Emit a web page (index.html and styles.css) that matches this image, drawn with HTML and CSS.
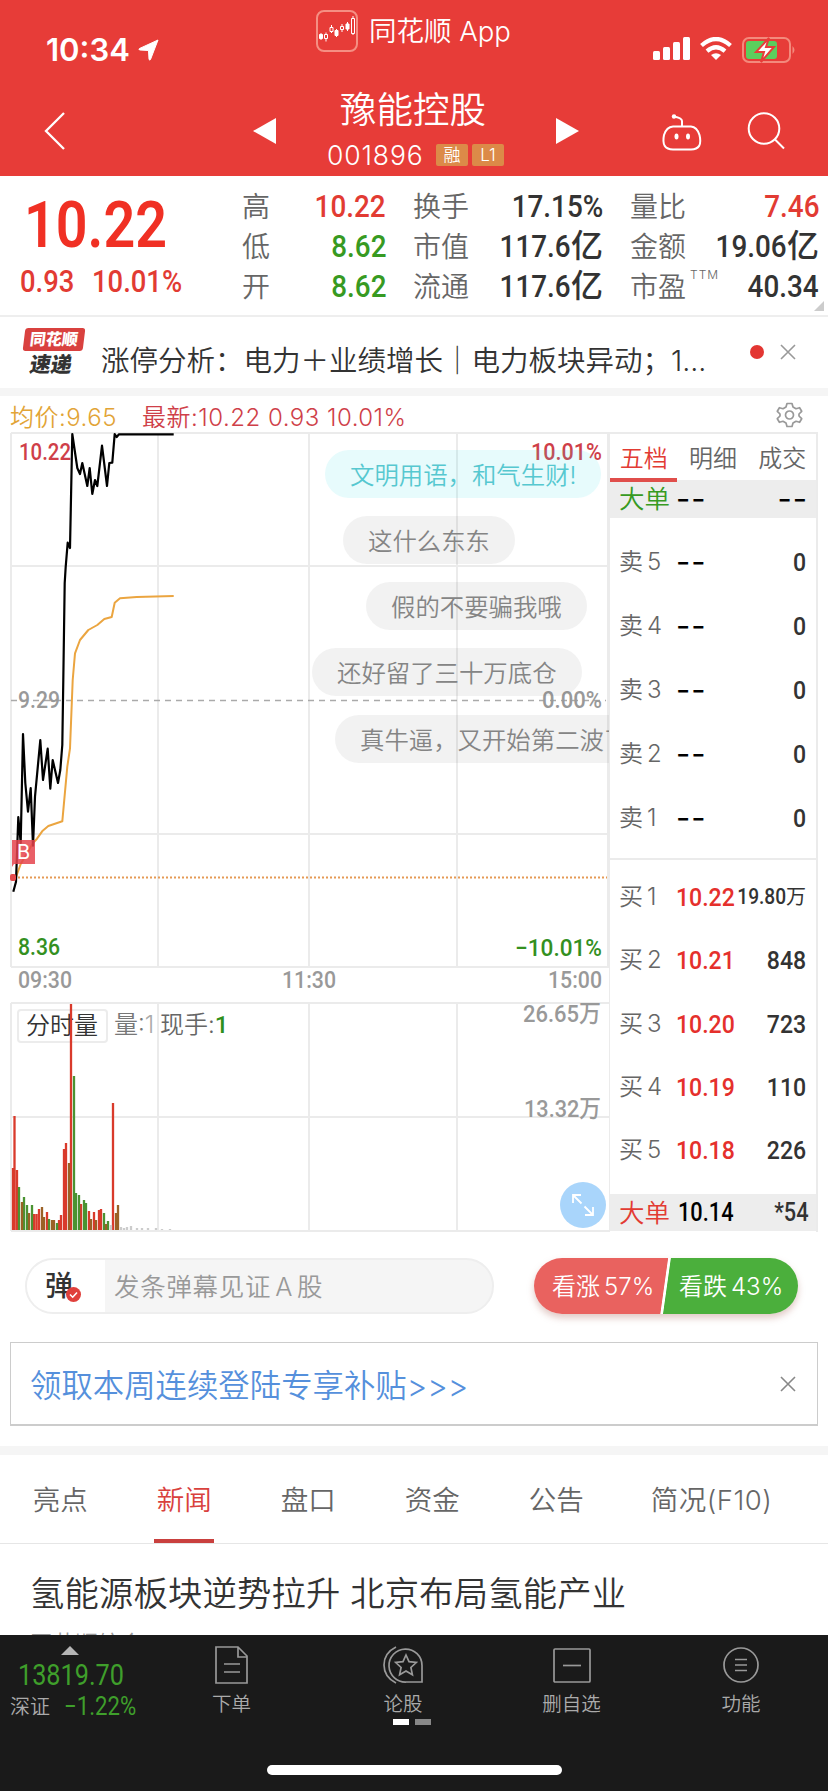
FILE: index.html
```html
<!DOCTYPE html>
<html lang="zh-CN">
<head>
    <meta charset="UTF-8">
    <meta name="viewport" content="width=device-width, initial-scale=1.0">
    <title>豫能控股 001896</title>
    <link rel="stylesheet" href="styles.css">
</head>
<body>
    <header class="header">
        <div class="status-bar">
            <div class="clock">10:34
                <svg width="22" height="22" viewBox="0 0 22 22"><path d="M20 1 1.500 9.500Q0 10.500 2 11L10.500 11.500 11 20Q11.500 22 12.500 20.500Z" fill="#fff" stroke="#fff" stroke-linejoin="round"/></svg>
            </div>
            <div class="app-name">
                <svg width="42" height="42" viewBox="0 0 42 42" fill="none" stroke="#fff">
                    <rect x="1" y="1" width="40" height="40" rx="7" stroke="#f58f83" stroke-width="2"/>
                    <path d="M5 23v7M10 22.500v9M15.500 15v8M20.500 19v8M26 14v8M31.500 12v9M37 6v19"/>
                    <path d="M3.500 24.500h3v4h-3zM19 20.500h3v5h-3zM30 14h3v5h-3z" fill="#fff"/>
                    <path d="M8.500 24.500h3v4h-3zM14 17.500h3v4h-3zM24.500 16.500h3v3h-3zM35.500 8.500h3v15h-3z" fill="#e73c38"/>
                </svg>
                <span>同花顺 App</span>
            </div>
            <div class="signals">
                <svg width="37" height="23" viewBox="0 0 37 23" fill="#fff"><rect y="14" width="7" height="9" rx="1.500"/><rect x="10" y="10" width="7" height="13" rx="1.500"/><rect x="20" y="5" width="7" height="18" rx="1.500"/><rect x="30" width="7" height="23" rx="1.500"/></svg>
                <svg width="32" height="23" viewBox="0 0 32 23" fill="none" stroke="#fff" stroke-width="4.200"><path d="M1.500 8.500Q16-4.500 30.500 8.500M7 14.200Q16 6.300 25 14.200"/><path d="M16 23l-5-5q5-3.600 10 0z" fill="#fff" stroke="none"/></svg>
                <svg width="54" height="26" viewBox="0 0 54 26"><rect x="1" y="1" width="47" height="24" rx="6" fill="none" stroke="#f38a7c" stroke-width="2"/><path d="M50.500 9q4 4 0 8z" fill="#f38a7c"/><rect x="4" y="4" width="31" height="18" rx="3" fill="#5bcf5d"/><path d="M27 1 14 15h8l-3 10 13-15h-8z" fill="#fff" stroke="#e73c38" stroke-width="2"/></svg>
            </div>
        </div>
        <div class="title-bar">
            <svg class="back" width="22" height="40" viewBox="0 0 22 40"><path d="M20 2 2 20l18 18" fill="none" stroke="#fff" stroke-width="2.300"/></svg>
            <svg class="prev" width="23" height="26" viewBox="0 0 23 26"><path d="M23 0v26L0 13z" fill="#fff"/></svg>
            <div class="stock">
                <h1>豫能控股</h1>
                <div class="code"><span>001896</span><i>融</i><i>L1</i></div>
            </div>
            <svg class="next" width="23" height="26" viewBox="0 0 23 26"><path d="M0 0v26l23-13z" fill="#fff"/></svg>
            <svg class="robot" width="42" height="38" viewBox="0 0 42 38" fill="none" stroke="#fff" stroke-width="2"><path d="M12 13.500H30Q36 14 38.500 22Q42 36.500 30 36.500H12Q0 36.500 3 22Q5.500 14 12 13.500Z"/><path d="M21 13V8q0-3-8-4.500"/><circle cx="13" cy="3.500" r="2.200" fill="#fff" stroke="none"/><ellipse cx="15.500" cy="23.500" rx="2" ry="3" fill="#fff" stroke="none"/><ellipse cx="27" cy="23.500" rx="2" ry="3" fill="#fff" stroke="none"/></svg>
            <svg class="search" width="38" height="38" viewBox="0 0 38 38" fill="none" stroke="#fff" stroke-width="2"><circle cx="17" cy="16.500" r="15.300"/><path d="m27.500 27 9.500 9.500"/></svg>
        </div>
    </header>

    <section class="quote">
        <div class="price">
            <div class="now"><b class="din">10.22</b></div>
            <div class="change"><b class="din">0.93</b><b class="din">10.01%</b></div>
        </div>
        <dl class="col col-1">
            <dt>高</dt><dd class="red"><b class="din">10.22</b></dd>
            <dt>低</dt><dd class="green"><b class="din">8.62</b></dd>
            <dt>开</dt><dd class="green"><b class="din">8.62</b></dd>
        </dl>
        <dl class="col col-2">
            <dt>换手</dt><dd><b class="din">17.15%</b></dd>
            <dt>市值</dt><dd><b class="din">117.6</b>亿</dd>
            <dt>流通</dt><dd><b class="din">117.6</b>亿</dd>
        </dl>
        <dl class="col col-3">
            <dt>量比</dt><dd class="red"><b class="din">7.46</b></dd>
            <dt>金额</dt><dd><b class="din">19.06</b>亿</dd>
            <dt>市盈<sup>TTM</sup></dt><dd><b class="din">40.34</b></dd>
        </dl>
        <div class="fold"></div>
    </section>

    <section class="flash">
        <div class="flash-logo"><span>同花顺</span><em>速递</em></div>
        <p>涨停分析：电力＋业绩增长｜电力板块异动；1...</p>
        <div class="dot"></div>
        <svg width="16" height="16" viewBox="0 0 16 16"><path d="m1 1 14 14M15 1 1 15" stroke="#999" stroke-width="1.600"/></svg>
    </section>

    <section class="chart-head">
        <span class="avg">均价:9.65</span>
        <span class="last">最新:10.22 0.93 10.01%</span>
        <svg width="27" height="26" viewBox="-13.500 -13 27 26" fill="none" stroke="#999" stroke-width="1.700" stroke-linejoin="round"><path d="M-2.500-11.500h5l1 3.500 3 1.700 3.600-1 2.100 3.600-2.700 2.700v2l2.700 2.700-2.100 3.600-3.600-1-3 1.700-1 3.500h-5l-1-3.500-3-1.700-3.600 1-2.100-3.600 2.700-2.700v-2l-2.700-2.700 2.100-3.600 3.600 1 3-1.700z"/><circle r="4"/></svg>
    </section>

    <section class="board">
        <div class="chart">
            <!-- price and volume share one x axis -->
            <svg width="609" height="806" viewBox="0 430 609 806">
                <g fill="none" stroke="#ebebeb" stroke-width="2">
                    <path d="M11 433H609M11 566H609M11 834H609M11 967H609M11 433V967M158 433V967M309 433V967M457 433V967M608 433V967"/>
                    <path d="M11 1003H609M11 1117H609M11 1231H609M11 1003V1231M158 1003V1231M309 1003V1231M457 1003V1231"/>
                </g>
                <path d="M11 700.500H606" stroke="#aaa" stroke-width="1.300" stroke-dasharray="6 5"/>
                <path d="M14 877.500H607" stroke="#e59a55" stroke-width="2" stroke-dasharray="2 2"/>

                <rect x="18" y="1010" width="89" height="32" rx="3" fill="#fff" stroke="#ececec" stroke-width="2"/>
                <g class="vol-text">
                    <text x="26" y="1034" fill="#333">分时量</text>
                    <text x="114" y="1033" fill="#777">量:<tspan fill="#aaa">1</tspan></text>
                    <text x="160" y="1033" fill="#666">现手:<tspan class="din-text" fill="#2f8f1c">1</tspan></text>
                </g>

                <g class="axis">
                    <text x="19" y="460" textLength="52" lengthAdjust="spacingAndGlyphs" fill="#cf3f49">10.22</text>
                    <text x="531" y="460" textLength="71" lengthAdjust="spacingAndGlyphs" fill="#cf3f49">10.01%</text>
                    <text x="18" y="708" textLength="42" lengthAdjust="spacingAndGlyphs" fill="#999">9.29</text>
                    <text x="542" y="708" textLength="60" lengthAdjust="spacingAndGlyphs" fill="#999">0.00%</text>
                    <text x="18" y="955" textLength="42" lengthAdjust="spacingAndGlyphs" fill="#34901f">8.36</text>
                    <text x="515" y="956" textLength="87" lengthAdjust="spacingAndGlyphs" fill="#34901f">−10.01%</text>
                    <text x="18" y="988" textLength="54" lengthAdjust="spacingAndGlyphs" fill="#999">09:30</text>
                    <text x="282" y="988" textLength="54" lengthAdjust="spacingAndGlyphs" fill="#999">11:30</text>
                    <text x="548" y="988" textLength="54" lengthAdjust="spacingAndGlyphs" fill="#999">15:00</text>
                    <text x="523" y="1022" textLength="78" lengthAdjust="spacingAndGlyphs" fill="#999">26.65万</text>
                    <text x="524" y="1117" textLength="77" lengthAdjust="spacingAndGlyphs" fill="#999">13.32万</text>
                </g>

                <g fill="none" stroke-width="2.300">
                    <path stroke="#d93a2b" d="M13 1230v-62M14.500 1230v-114M17 1230v-60M34 1230v-16M36.500 1230v-16M39 1230v-21M47 1230v-18M59 1230v-10M61 1230v-15M64 1230v-81M66 1230v-87M71 1230v-226M81 1230v-26M89 1230v-19M94 1230v-18M99 1230v-20M101 1230v-21M113 1230v-127"/>
                    <path stroke="#4a9332" d="M19 1230v-43M24 1230v-33M27 1230v-25M32 1230v-25M49 1230v-11M57 1230v-7M74 1230v-154M76 1230v-37M79 1230v-35M84 1230v-30M86 1230v-27M104 1230v-17M108 1230v-9"/>
                    <path stroke="#9a6126" d="M22 1230v-28M29 1230v-17M42 1230v-23M44 1230v-13M52 1230v-10M54 1230v-10M69 1230v-67M91 1230v-11M96 1230v-10M106 1230v-6M116 1230v-17M118 1230v-25"/>
                    <path stroke="#ccc" d="M111 1230v-5M121 1230v-3M124 1230v-2M127 1230v-3M131 1230v-4M137 1230v-2M142 1230v-2M148 1230v-2M156 1230v-2M162 1230v-1M170 1230v-1"/>
                </g>

                <polyline fill="none" stroke="#eba540" stroke-width="2" stroke-linejoin="round" points="15,880 20.700,864 33,843 37,838.700 42.700,830.700 48.300,826 62.300,821.300 67.300,766.700 70,748.300 72.700,680 75,653.300 80,640 88.300,630 97.300,625 104.300,619 111.700,617 114.700,602.700 120,598.300 136.700,597 173.700,596"/>
                <polyline fill="none" stroke="#000" stroke-width="2.200" stroke-linejoin="round" points="13.300,891.700 16,881.700 18.300,817 20.700,843 23,734 25.300,783 28,811.700 30.700,788 33,845.700 35,796.700 40.300,740 43,780 47.700,748.700 50.300,788.700 52.700,760 58,783 60.300,770 62.300,745 63.300,680 64.700,583 65.700,566.700 67.700,542.700 70,548 72.300,434 77.300,468 80,474 82.300,463 87.300,486 89.700,468 92.300,494 95,480 97.300,486 102,445.700 107,486 109.300,463 112.300,462.700 114.700,434 116.700,437 119,434.300 173.700,434.300"/>

                <rect x="10" y="874" width="6" height="7" rx="2" fill="#e54a4a"/>
                <path d="M12 840h23v24H14l-2 3z" fill="#e5434c" fill-opacity=".85"/>
                <text class="buy-mark" x="17" y="859" fill="#fff">B</text>
            </svg>
            <div class="danmu danmu-1">文明用语，和气生财!</div>
            <div class="danmu danmu-2">这什么东东</div>
            <div class="danmu danmu-3">假的不要骗我哦</div>
            <div class="danmu danmu-4">还好留了三十万底仓</div>
            <div class="danmu danmu-5">真牛逼，又开始第二波了</div>
            <div class="expand">
                <svg width="24" height="24" viewBox="0 0 24 24" fill="none" stroke="#fff" stroke-width="1.800"><path d="M2 10V2h8M2 2l8.500 8.500M22 14v8h-8M22 22l-8.500-8.500"/></svg>
            </div>
        </div>

        <aside class="book">
            <nav class="book-tabs"><span class="active">五档</span><span>明细</span><span>成交</span></nav>
            <div class="big-order"><span class="green">大单</span><b class="dash">--</b><b class="dash right">--</b></div>
            <div class="sells">
                <div class="row"><span>卖<i>5</i></span><b class="dash">--</b><b class="din">0</b></div>
                <div class="row"><span>卖<i>4</i></span><b class="dash">--</b><b class="din">0</b></div>
                <div class="row"><span>卖<i>3</i></span><b class="dash">--</b><b class="din">0</b></div>
                <div class="row"><span>卖<i>2</i></span><b class="dash">--</b><b class="din">0</b></div>
                <div class="row"><span>卖<i>1</i></span><b class="dash">--</b><b class="din">0</b></div>
            </div>
            <div class="buys">
                <div class="row"><span>买<i>1</i></span><b class="din bid">10.22</b><div class="small"><b class="din">19.80</b>万</div></div>
                <div class="row"><span>买<i>2</i></span><b class="din bid">10.21</b><b class="din">848</b></div>
                <div class="row"><span>买<i>3</i></span><b class="din bid">10.20</b><b class="din">723</b></div>
                <div class="row"><span>买<i>4</i></span><b class="din bid">10.19</b><b class="din">110</b></div>
                <div class="row"><span>买<i>5</i></span><b class="din bid">10.18</b><b class="din">226</b></div>
            </div>
            <div class="big-order bottom"><span class="red">大单</span><b class="din bid">10.14</b><b class="din right">*54</b></div>
        </aside>
    </section>

    <section class="vote">
        <div class="danmu-input">
            <div class="danmu-switch">弹
                <svg width="15" height="15" viewBox="0 0 15 15"><circle cx="7.500" cy="7.500" r="7.500" fill="#e0403c"/><path d="m4 7.500 2.700 2.700L11 5.500" fill="none" stroke="#fff" stroke-width="1.600"/></svg>
            </div>
            <span>发条弹幕见证<i>A</i>股</span>
        </div>
        <div class="vote-bar">
            <div class="up">看涨<i>57%</i></div>
            <div class="down">看跌<i>43%</i></div>
        </div>
    </section>

    <section class="ad">
        <a>领取本周连续登陆专享补贴&gt;&gt;&gt;</a>
        <svg width="16" height="16" viewBox="0 0 16 16"><path d="m1 1 14 14M15 1 1 15" stroke="#888" stroke-width="1.600"/></svg>
    </section>

    <nav class="tabs">
        <span>亮点</span>
        <span class="active">新闻</span>
        <span>盘口</span>
        <span>资金</span>
        <span>公告</span>
        <span>简况(F10)</span>
    </nav>

    <article class="news">
        <h2>氢能源板块逆势拉升 北京布局氢能产业</h2>
        <p>同花顺综合</p>
    </article>

    <footer class="footer">
        <div class="index">
            <div class="caret"></div>
            <b class="din">13819.70</b>
            <div class="index-name">深证<b class="din">−1.22%</b></div>
        </div>
        <div class="item item-1">
            <svg width="36" height="38" viewBox="0 0 36 38" fill="none" stroke="#999" stroke-width="1.700"><path d="M2 1h22l9 9v27H2zM24 1v10h9M10 18h16M10 26h16"/></svg>
            <span>下单</span>
        </div>
        <div class="item item-2">
            <svg width="40" height="38" viewBox="0 0 40 38" fill="none" stroke="#999" stroke-width="1.700"><path d="M13 1Q1 7 1 19t12 18"/><path d="M39 36H23.500A16.500 16.500 0 1 1 39 19.500z"/><path d="m23 9 3 6.700 7.300.8-5.400 5 1.500 7.200L23 25l-6.400 3.700 1.500-7.200-5.400-5 7.300-.8z"/></svg>
            <span>论股</span>
            <div class="pager"><i></i><i></i></div>
        </div>
        <div class="item item-3">
            <svg width="40" height="38" viewBox="0 0 40 38" fill="none" stroke="#999" stroke-width="1.700"><rect x="2" y="3" width="36" height="33" rx="1"/><path d="M11 19.500h18"/></svg>
            <span>删自选</span>
        </div>
        <div class="item item-4">
            <svg width="38" height="38" viewBox="0 0 38 38" fill="none" stroke="#999" stroke-width="1.700"><circle cx="19" cy="19" r="17"/><path d="M13 13.500h12M13 19h12M13 24.500h12"/></svg>
            <span>功能</span>
        </div>
        <div class="home"></div>
    </footer>
</body>
</html>
```
FILE: styles.css
```css
:root {
    --red: #e73c38;
    --text-red: #e23b33;
    --green: #379a22;
    --line: #ebebeb;
    --strip: #f5f5f5;
    --gray: #666;
}

* {
    box-sizing: border-box;
}

body {
    width: 828px;
    height: 1792px;
    margin: 0;
    background: #fff;
    color: #333;
    font-family: Inter, "Noto Sans CJK SC", sans-serif;
    font-weight: 350;
    overflow: hidden;
}

h1, h2, p, dl, dd {
    margin: 0;
    font-weight: inherit;
}

i, em {
    font-style: normal;
}

svg {
    display: block;
    flex: none;
}

.red {
    color: var(--text-red);
}

.green {
    color: var(--green);
}

/* narrow figures */
.din {
    display: inline-block;
    font-family: Roboto, sans-serif;
    font-weight: 500;
    transform: scaleX(.87);
    transform-origin: right center;
}

.header {
    height: 176px;
    background: var(--red);
    color: #fff;
}

.status-bar {
    display: grid;
    grid-template-columns: 316px 337px 1fr;
    height: 78px;
}

.clock {
    display: flex;
    gap: 8px;
    padding: 32px 0 0 46px;
    font-size: 31px;
    font-weight: 600;
    line-height: 36px;
}

.clock svg {
    margin-top: 7px;
}

.app-name {
    display: flex;
    gap: 11px;
    padding-top: 10px;
    font-size: 27.500px;
    line-height: 43px;
}

.signals {
    display: flex;
    gap: 10px;
    padding-top: 37px;
}

.title-bar {
    display: flex;
    height: 98px;
}

.back {
    margin: 33px 0 0 44px;
}

.prev {
    margin: 40px 0 0 187px;
}

.next {
    margin: 40px 0 0 51px;
}

.robot {
    margin: 35px 0 0 82px;
}

.search {
    margin: 34px 0 0 44px;
}

.stock {
    width: 178px;
    margin-left: 51px;
}

.stock h1 {
    margin-left: 13px;
    font-size: 36.500px;
    line-height: 65px;
    height: 64px;
}

.code {
    display: flex;
    gap: 4px;
    font-size: 26.500px;
    line-height: 26px;
}

.code span {
    width: 105px;
    letter-spacing: .9px;
    white-space: nowrap;
}

.code i {
    width: 32px;
    height: 22px;
    margin-top: 2px;
    border-radius: 2px;
    background: #dc8a48;
    font-size: 17px;
    line-height: 22px;
    text-align: center;
}

.quote {
    position: relative;
    display: grid;
    grid-template-columns: 242px 144px 217px 216px;
    height: 141px;
    border-bottom: 2px solid #eee;
}

.now {
    height: 94px;
    padding-left: 24px;
    color: #f03024;
    font-size: 64px;
    line-height: 95px;
}

.now .din {
    font-weight: 600;
}

.price .din {
    transform-origin: left center;
}

.change {
    display: flex;
    padding-left: 20px;
    color: var(--text-red);
    font-size: 31.500px;
    line-height: 24px;
}

.change .din:first-child {
    width: 72px;
}

.col {
    display: grid;
    grid-template-columns: 57px 1fr;
    grid-template-rows: repeat(3, 40px);
    padding-top: 10px;
    line-height: 43px;
}

.col dt {
    color: var(--gray);
    font-size: 28px;
    white-space: nowrap;
}

.col dd {
    font-size: 32px;
    line-height: 39px;
    text-align: right;
    font-weight: 500;
    white-space: nowrap;
}

.col-2, .col-3 {
    padding-left: 27px;
}

.col dt sup {
    margin-left: 4px;
    font-size: 12px;
    letter-spacing: 1px;
    line-height: 0;
    vertical-align: 18px;
}

.fold {
    position: absolute;
    right: 4px;
    bottom: 4px;
    border: 5px solid;
    border-color: transparent #ccc #ccc transparent;
}

.flash {
    display: flex;
    height: 79px;
    border-bottom: 8px solid var(--strip);
}

.flash-logo {
    width: 60px;
    margin: 11px 17px 0 24px;
    color: #333;
    font-weight: 900;
}

.flash-logo span {
    display: block;
    height: 23px;
    border-radius: 3px;
    background: #d9413f;
    color: #fff;
    font-size: 16px;
    line-height: 22px;
    text-align: center;
    transform: skewX(-7deg);
}

.flash-logo em {
    display: block;
    margin-left: 6px;
    font-size: 21px;
    line-height: 27px;
    transform: skewX(-10deg);
}

.flash p {
    width: 648px;
    font-size: 28.500px;
    line-height: 88px;
    height: 71px;
    white-space: nowrap;
}

.dot {
    width: 14px;
    height: 14px;
    margin: 28px 16px 0 1px;
    border-radius: 50%;
    background: #e33632;
}

.flash svg {
    margin-top: 27px;
}

.chart-head {
    display: flex;
    height: 34px;
    padding: 3px 25px 0 10px;
    font-size: 24px;
    line-height: 38px;
    letter-spacing: .5px;
}

.avg {
    width: 132px;
    color: #e2a436;
}

.last {
    color: #cf3f49;
    white-space: nowrap;
}

.chart-head svg {
    margin: 3px 0 0 auto;
}

.board {
    display: flex;
    height: 806px;
}

.chart {
    position: relative;
    width: 609px;
    overflow: hidden;
}

.axis {
    font: 500 24px Roboto, "Noto Sans CJK SC", sans-serif;
}

.vol-text {
    font-size: 24px;
}

.din-text {
    font-family: Roboto, sans-serif;
    font-weight: 500;
}

.buy-mark {
    font-size: 20px;
    font-weight: 400;
}

/* comments floating over the chart */
.danmu {
    position: absolute;
    height: 48px;
    padding: 0 25px;
    border-radius: 24px;
    background: rgba(90, 90, 90, .08);
    color: #858585;
    font-size: 24.400px;
    line-height: 50px;
    white-space: nowrap;
}

.danmu-1 {
    top: 20px;
    left: 325px;
    background: rgba(60, 225, 230, .12);
    color: #56c8d0;
}

.danmu-2 {
    top: 86px;
    left: 343px;
}

.danmu-3 {
    top: 152px;
    left: 366px;
}

.danmu-4 {
    top: 218px;
    left: 312px;
}

.danmu-5 {
    top: 285px;
    left: 335px;
}

.expand {
    position: absolute;
    top: 752px;
    left: 560px;
    display: grid;
    place-items: center;
    width: 46px;
    height: 46px;
    border-radius: 50%;
    background: #a9d5fb;
}

.book {
    width: 209px;
    height: 800px;
    margin-top: 2px;
    border: solid var(--line);
    border-width: 2px 2px 0 1px;
}

.book-tabs {
    display: flex;
    height: 46px;
    gap: 2px;
    color: var(--gray);
    font-size: 24px;
    line-height: 49px;
    text-align: center;
}

.book-tabs span {
    width: 68px;
}

.book-tabs .active {
    height: 48px;
    border-bottom: 4px solid #e04e4b;
    color: var(--text-red);
}

.big-order {
    display: grid;
    grid-template-columns: 57px 1fr auto;
    height: 38px;
    padding: 0 10px 0 9px;
    background: #ededed;
    font-size: 25.500px;
    line-height: 38px;
}

.big-order.bottom {
    height: 37px;
    padding-right: 7px;
}

.big-order.bottom .bid {
    color: #000;
    margin-left: 2px;
}

.dash {
    font-family: Inter, sans-serif;
    font-size: 31px;
    font-weight: 400;
    color: #000;
    letter-spacing: 1px;
}

.dash.right {
    margin-right: -2px;
}

.sells {
    height: 340px;
    padding-top: 12px;
}

.row {
    display: grid;
    grid-template-columns: 57px 1fr auto;
    height: 64px;
    padding: 0 10px 0 9px;
    color: var(--gray);
    font-size: 24px;
    line-height: 64px;
}

.row i {
    margin-left: 4px;
}

.row .din {
    font-size: 26.500px;
}

.bottom .din {
    font-size: 25px;
}

.row > .din, .small {
    color: #333;
}

.row .bid {
    color: #e5302c;
}

.row .bid, .bottom .bid {
    transform-origin: left center;
}

.buys {
    height: 336px;
    padding-top: 5px;
    border-top: 2px solid var(--line);
}

.buys .row {
    height: 63.300px;
}

.small {
    margin-left: -20px;
    font-size: 20px;
    font-weight: 400;
    white-space: nowrap;
}

.row .small .din {
    font-size: 22px;
    font-weight: 500;
}

.vote {
    display: flex;
    gap: 40px;
    padding: 22px 30px 0 25px;
    height: 106px;
}

.danmu-input {
    display: flex;
    width: 469px;
    height: 56px;
    border: 2px solid #eee;
    border-radius: 28px;
    background: #f5f5f5;
    color: #999;
    font-size: 25.500px;
    line-height: 53px;
    letter-spacing: .7px;
    overflow: hidden;
}

.danmu-switch {
    position: relative;
    width: 78px;
    margin-right: 9px;
    padding-left: 18px;
    background: #fff;
    color: #333;
    font-size: 28px;
    font-weight: 500;
}

.danmu-switch svg {
    position: absolute;
    left: 39px;
    top: 27px;
}

.danmu-input i {
    margin: 0 4px;
}

.vote-bar {
    display: flex;
    width: 264px;
    height: 56px;
    border-radius: 28px;
    background: linear-gradient(98deg, #e9625f 49.200%, #fff 49.500%, #fff 50.200%, #4baf3c 50.500%);
    box-shadow: 0 4px 7px rgba(180, 120, 110, .4);
    color: #fff;
    font-size: 24px;
    line-height: 58px;
}

.vote-bar i {
    margin-left: 4px;
}

.up {
    width: 145px;
    padding-left: 18px;
}

.ad {
    display: flex;
    align-items: center;
    justify-content: space-between;
    height: 84px;
    margin: 0 10px 20px;
    padding: 0 21px 0 19px;
    border: 1px solid #ccc;
    border-bottom-width: 2px;
    color: #5590dc;
    font-size: 31.400px;
}

.tabs {
    display: flex;
    height: 98px;
    padding-left: 23px;
    gap: 49.500px;
    border-top: 9px solid var(--strip);
    border-bottom: 1px solid #e6e6e6;
    color: var(--gray);
    font-size: 27.500px;
    line-height: 91px;
}

.tabs span {
    width: 74.500px;
    text-align: center;
    white-space: nowrap;
}

.tabs span:last-child {
    width: 137px;
    letter-spacing: .5px;
}

.tabs .active {
    color: #d9413d;
    background: linear-gradient(#c9403e, #c9403e) center bottom / 60px 4px no-repeat;
}

.news {
    height: 91px;
    padding: 0 30px;
    overflow: hidden;
}

.news h2 {
    height: 84px;
    font-size: 34.300px;
    line-height: 100px;
    letter-spacing: .2px;
    white-space: nowrap;
}

.news p {
    color: #999;
    font-size: 22.500px;
    line-height: 32px;
}

.footer {
    position: relative;
    display: grid;
    grid-template-columns: 146px 171px 172px 165px 174px;
    height: 156px;
    background: #1a1a1a;
    color: #aaa;
    font-size: 19.500px;
}

.index {
    color: #3f9f2b;
    white-space: nowrap;
}

.index .din {
    display: block;
    margin-left: 18px;
    font-size: 29px;
    font-weight: 400;
    line-height: 36px;
    transform-origin: left center;
}

.caret {
    width: 0;
    margin: 11px 0 2px 61px;
    border: solid transparent;
    border-width: 0 9px 9px;
    border-bottom-color: #b5b5b5;
}

.index-name {
    display: flex;
    padding-left: 10px;
    color: #aaa;
    font-size: 20px;
    line-height: 28px;
}

.index-name .din {
    margin-left: 14px;
    color: #3f9f2b;
    font-size: 25.500px;
    line-height: 27px;
}

.item {
    display: flex;
    flex-direction: column;
    align-items: center;
    padding-top: 11px;
}

.item span {
    margin-top: 5px;
    line-height: 30px;
}

.pager {
    display: flex;
    gap: 6px;
    margin: 0 0 0 17px;
}

.pager i {
    width: 16px;
    height: 6px;
    background: #fff;
}

.pager i:last-child {
    background: #888;
}

.home {
    position: absolute;
    left: 267px;
    bottom: 16px;
    width: 295px;
    height: 10px;
    border-radius: 5px;
    background: #fff;
}
```
